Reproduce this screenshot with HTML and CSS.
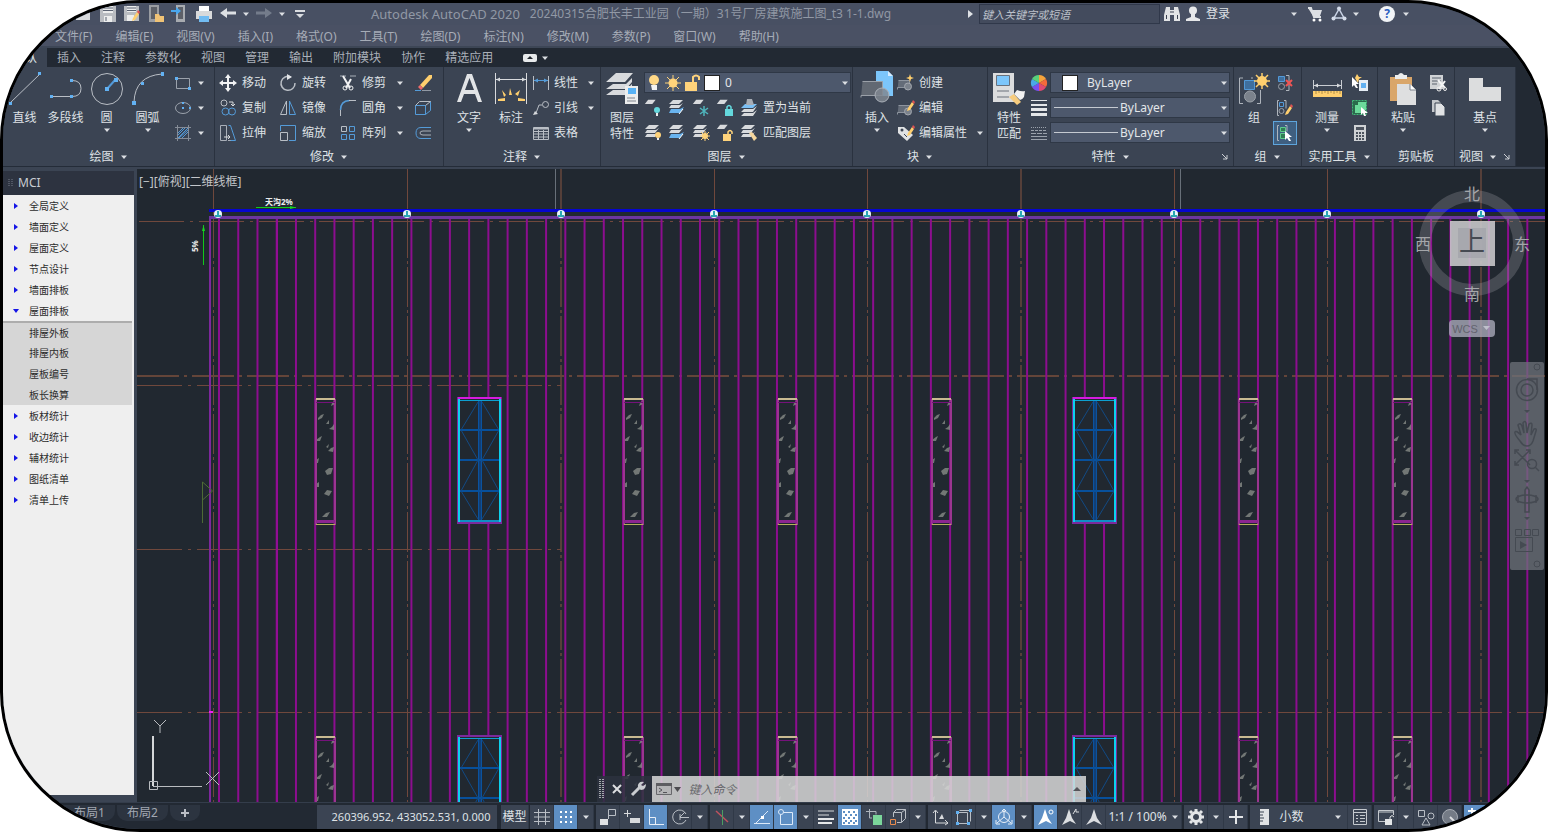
FILE: index.html
```html
<!DOCTYPE html>
<html lang="zh-CN">
<head>
<meta charset="utf-8">
<title>Autodesk AutoCAD 2020</title>
<link rel="stylesheet" href="styles.css">
</head>
<body>
<svg class="sprite" aria-hidden="true">
  <!-- shared 18px parts -->
  <symbol id="dn" viewBox="0 0 8 8"><path d="M1 2.500h6L4 6z" fill="#dcdfe3"/></symbol>
  <symbol id="sheet" viewBox="0 0 18 18"><path d="M5 1h9l-4 5H1z" fill="#d8dadd"/></symbol>
  <symbol id="stack" viewBox="0 0 18 18"><path d="M5 1h10l-4 4H1zM3 6h9l3-2-4 5H1zM3 10h9l3-2-4 5H1z" fill="#d8dadd"/></symbol>
  <symbol id="stackb" viewBox="0 0 18 18"><path d="M5 1h10l-4 4H1zM3 6h9l3-2-4 5H1z" fill="#d8dadd"/><path d="M3 10h9l4-2-4 6H1z" fill="#69b4f0"/><path d="m11 15 4-5" stroke="#fff"/></symbol>
  <symbol id="blk" viewBox="0 0 18 18"><path d="M1.500 6.500h11v7h-12v2" fill="#646c78" stroke="#8d949e"/><circle cx="11" cy="12.500" r="3.500" fill="#7b828c" stroke="#a2a7ae"/></symbol>
  <symbol id="pen" viewBox="0 0 18 18"><path d="m11 10-1 3 3-1 4-6-2-2z" fill="#ffcf6e"/><path d="m15 4 2 2 1-2-2-2z" fill="#e05252"/></symbol>
</svg>

<div class="frame">
  <header class="title">
    <div class="quick">
      <button aria-label="打开"><svg class="i" viewBox="0 0 18 18"><path d="M1 4h6l2 2h6v9H1z" fill="#d9dbde"/></svg></button>
      <button aria-label="保存"><svg class="i" viewBox="0 0 18 18"><path d="M1 1h16v16H1z" fill="#b9bcc1"/><path d="M4 1h10v7H4zM5 11h8v6H5z" fill="#eceded"/><path d="M4 3h10M4 5.500h10M7 12v4" stroke="#596171"/></svg></button>
      <button aria-label="另存为"><svg class="i" viewBox="0 0 18 18"><path d="M1 1h15v15H1z" fill="#b9bcc1"/><path d="M4 1h9v6H4zM4 10h7v6H4z" fill="#eceded"/><path d="M4 3h9M4 5.500h9" stroke="#596171"/><use href="#pen" y="3" x="-1" width="18" height="18"/></svg></button>
      <button aria-label="从 Web 打开"><svg class="i" viewBox="0 0 18 18"><path d="M2 0h10v17H2z" fill="#9a9da2"/><path d="M4 2h6v12H4z" fill="#5d6068"/><path d="M8 9h4l1 2h4v6H8z" fill="#f0c376"/></svg></button>
      <button aria-label="保存到 Web"><svg class="i" viewBox="0 0 18 18"><path d="M5 0h9v17H5z" fill="#a8abb0"/><path d="M7 2h5v12H7z" fill="#5d6068"/><path d="M0 5h5V2l5 4-5 4V7H0z" fill="#4aa7ee"/></svg></button>
      <button aria-label="打印"><svg class="i" viewBox="0 0 18 18"><path d="M4 1h10v5H4z" fill="#fff"/><path d="M1 6h16v8H1z" fill="#d9dadb"/><path d="M4 11h10v6H4z" fill="#72bcf2"/></svg></button>
      <button aria-label="放弃"><svg class="i" viewBox="0 0 18 18"><path d="m1 8 7-5v3.500h9v3H8V13z" fill="#dde0e4"/></svg></button>
      <button class="arr" aria-label="放弃列表"><svg><use href="#dn"/></svg></button>
      <button aria-label="重做"><svg class="i" viewBox="0 0 18 18"><path d="m17 8-7-5v3.500H1v3h9V13z" fill="#747c8b"/></svg></button>
      <button class="arr" aria-label="重做列表"><svg><use href="#dn"/></svg></button>
      <button aria-label="自定义快速访问工具栏"><svg class="i" viewBox="0 0 18 18"><path d="M4 5h10v2H4zM5 9h8l-4 4z" fill="#d9dce0"/></svg></button>
    </div>
    <h1><span class="app">Autodesk AutoCAD 2020</span><span>20240315合肥长丰工业园（一期）31号厂房建筑施工图_t3 1-1.dwg</span></h1>
    <div class="info">
      <svg class="play" viewBox="0 0 8 8"><path d="m2 0 5 4-5 4z" fill="#dfe2e6"/></svg>
      <input type="search" aria-label="搜索" placeholder="键入关键字或短语">
      <button class="wide" aria-label="查找"><svg class="i" viewBox="0 0 18 18"><path d="M3 2h4v3h4V2h4l2 8v6h-6v-6H7v6H1v-6z" fill="#e2e4e6"/><path d="M3.500 10v4M14.500 10v4M7 7h4" stroke="#3c4352"/></svg></button>
      <button class="wide login"><svg class="i" viewBox="0 0 18 18"><circle cx="9" cy="5.500" r="4" fill="#e6e7e9"/><path d="M7 9h4v3l5 2v2H2v-2l5-2z" fill="#e6e7e9"/></svg>登录</button>
      <button class="arr far" aria-label="登录菜单"><svg><use href="#dn"/></svg></button>
      <button aria-label="应用商店"><svg class="i" viewBox="0 0 18 18"><path d="M2 3h3l1 2h10l-2 6H7z" fill="#dcdfe4"/><path d="M2 3h3l3 9h7" fill="none" stroke="#dcdfe4" stroke-width="2"/><circle cx="8" cy="15" r="1.500" fill="#fff"/><circle cx="14" cy="15" r="1.500" fill="#fff"/></svg></button>
      <button aria-label="保持连接"><svg class="i" viewBox="0 0 18 18"><path d="M9 4 4 13h10z" fill="none" stroke="#c9d3e6" stroke-width="1.500"/><circle cx="9" cy="3.500" r="2" fill="#d5dcea"/><circle cx="3.500" cy="13.500" r="2" fill="#d5dcea"/><circle cx="14.500" cy="13.500" r="2" fill="#d5dcea"/></svg></button>
      <button class="arr" aria-label="连接菜单"><svg><use href="#dn"/></svg></button>
      <button class="help" aria-label="帮助">?</button>
      <button class="arr" aria-label="帮助菜单"><svg><use href="#dn"/></svg></button>
    </div>
  </header>

  <nav class="menu" aria-label="菜单">
    <button>文件(F)</button><button>编辑(E)</button><button>视图(V)</button><button>插入(I)</button><button>格式(O)</button><button>工具(T)</button><button>绘图(D)</button><button>标注(N)</button><button>修改(M)</button><button>参数(P)</button><button>窗口(W)</button><button>帮助(H)</button>
  </nav>

  <nav class="tabs" aria-label="功能区">
    <button class="on">默认</button><button>插入</button><button>注释</button><button>参数化</button><button>视图</button><button>管理</button><button>输出</button><button>附加模块</button><button>协作</button><button>精选应用</button>
    <button class="mini" aria-label="最小化"><svg width="14" height="8" viewBox="0 0 14 8"><rect width="14" height="8" rx="2" fill="#e8eaec"/><path d="M4 5h6L7 2z" fill="#20262e"/></svg><svg class="d"><use href="#dn"/></svg></button>
  </nav>

  <div class="ribbon">
    <section class="g draw">
      <div class="body">
        <button class="big"><svg class="b" viewBox="0 0 34 34"><path d="M2 32 32 3" stroke="#b9bec5"/><path d="M1 31h3v3H1zM30 1h3v3h-3z" fill="#62b1f2"/></svg>直线</button>
        <button class="big"><svg class="b" viewBox="0 0 34 34"><path d="M2 25.500h21q9 0 9-8t-9-8" fill="none" stroke="#b9bec5"/><path d="M1 24h3v3H1zM21 24h3v3h-3zM21 8h3v3h-3z" fill="#62b1f2"/></svg>多段线</button>
        <button class="big"><svg class="b" viewBox="0 0 34 34"><circle cx="17" cy="18" r="15.500" fill="none" stroke="#b9bec5"/><path d="m17 18 8-9" stroke="#5299d8" stroke-width="2"/><path d="M15 16h4v4h-4zM24 7h4v4h-4z" fill="#62b1f2"/></svg>圆<svg class="d"><use href="#dn"/></svg></button>
        <button class="big"><svg class="b" viewBox="0 0 34 34"><path d="M3 31Q4 5 31 3" fill="none" stroke="#b9bec5"/><path d="M1 30h4v4H1zM10 11h3v3h-3zM30 1h3v4h-3z" fill="#62b1f2"/></svg>圆弧<svg class="d"><use href="#dn"/></svg></button>
        <div class="col gap">
          <button class="s" aria-label="矩形"><svg class="i" viewBox="0 0 18 18"><path d="M2.500 4.500h13v10h-13z" fill="none" stroke="#9ba2ac"/><path d="M1 3h3v3H1zM14 13h3v3h-3z" fill="#62b1f2"/></svg><svg class="d"><use href="#dn"/></svg></button>
          <button class="s" aria-label="椭圆"><svg class="i" viewBox="0 0 18 18"><ellipse cx="9" cy="9" rx="7.500" ry="5.500" fill="none" stroke="#9ba2ac"/><path d="M8 8h2v2H8zM15 8h2v2h-2zM8 3h2v2H8z" fill="#62b1f2"/></svg><svg class="d"><use href="#dn"/></svg></button>
          <button class="s" aria-label="图案填充"><svg class="i" viewBox="0 0 18 18"><path d="M3.500 1v16M14.500 1v16M1 3.500h16M1 14.500h16" stroke="#858c97"/><path d="m4 9 5-5M4 14 14 4M8 14l6-6M4 11l7-7M5 14l9-8" stroke="#5299d8"/></svg><svg class="d"><use href="#dn"/></svg></button>
        </div>
      </div>
      <h2>绘图<svg class="d"><use href="#dn"/></svg></h2>
    </section>

    <section class="g modify">
      <div class="body">
        <div class="col c60">
          <button class="s"><svg class="i" viewBox="0 0 18 18"><path d="m9 0 3 4h-2v4h4V6l4 3-4 3v-2h-4v4h2l-3 4-3-4h2v-4H4v2L0 9l4-3v2h4V4H6z" fill="#f1f2f3"/></svg>移动</button>
          <button class="s"><svg class="i" viewBox="0 0 18 18" fill="none"><circle cx="5" cy="4" r="3" stroke="#b9bec5"/><path d="M10 3h4v4m-2-2 2 2 2-2" stroke="#d8dadd"/><circle cx="6.500" cy="12.500" r="3.500" stroke="#549bd8"/><circle cx="13" cy="12.500" r="3.500" stroke="#549bd8"/></svg>复制</button>
          <button class="s"><svg class="i" viewBox="0 0 18 18" fill="none"><path d="M1.500 1.500h6v15h-6zM9 16.500h3" stroke="#a9afb8"/><path d="M9.500 1.500h2l5 15h-5" stroke="#549bd8"/><path d="M5 13h6m-2-2 2 2-2 2" stroke="#d8dadd"/></svg>拉伸</button>
        </div>
        <div class="col c60">
          <button class="s"><svg class="i" viewBox="0 0 18 18" fill="none"><path d="M12 3A7 7 0 1 0 16 9" stroke="#b9bec5" stroke-width="1.500"/><path d="M8 0v6l5-3z" fill="#e3e5e8"/></svg>旋转</button>
          <button class="s"><svg class="i" viewBox="0 0 18 18" fill="none"><path d="M7.500 2v13.500H1.500z" stroke="#b9bec5"/><path d="M10.500 2v13.500h6z" stroke="#549bd8"/></svg>镜像</button>
          <button class="s"><svg class="i" viewBox="0 0 18 18" fill="none"><path d="M1.500 7V1.500h15v15H10" stroke="#549bd8"/><path d="M1.500 8.500h7v8h-7z" stroke="#b9bec5"/></svg>缩放</button>
        </div>
        <div class="col c75">
          <button class="s"><svg class="i" viewBox="0 0 18 18" fill="none"><path d="M1 2h6M11 2h6" stroke="#a9afb8"/><path d="m4 2 7 12M12 5 7 14" stroke="#f1f2f3" stroke-width="2"/><circle cx="6" cy="14" r="2" stroke="#f1f2f3"/><circle cx="12" cy="14" r="2" stroke="#f1f2f3"/></svg>修剪<svg class="d"><use href="#dn"/></svg></button>
          <button class="s"><svg class="i" viewBox="0 0 18 18" fill="none"><path d="M1.500 17v-6" stroke="#b9bec5"/><path d="M1.500 11q0-9 9-9.500" stroke="#549bd8" stroke-width="1.500"/><path d="M10 1.500h7" stroke="#b9bec5"/></svg>圆角<svg class="d"><use href="#dn"/></svg></button>
          <button class="s"><svg class="i" viewBox="0 0 18 18" fill="none"><path d="M2.500 2.500h5v5h-5z" stroke="#b9bec5"/><path d="M10.500 2.500h5v5h-5zM2.500 10.500h5v5h-5zM10.500 10.500h5v5h-5z" stroke="#549bd8"/></svg>阵列<svg class="d"><use href="#dn"/></svg></button>
        </div>
        <div class="col">
          <button class="s" aria-label="删除"><svg class="i" viewBox="0 0 18 18"><path d="m6 11 9-10h3v3L9 14z" fill="#ffcf6e"/><path d="m4 13 2-2 3 3-2 2z" fill="#f06a6a"/><path d="M1 16.500h6" stroke="#549bd8"/><path d="M8 16.500h9" stroke="#9299a4"/></svg></button>
          <button class="s" aria-label="分解"><svg class="i" viewBox="0 0 18 18" fill="none"><path d="M1.500 6.500h10v9h-10zM11.500 15.500l5-4v-9" stroke="#549bd8"/><path d="m1.500 6.500 4-4h11l-5 4" stroke="#b9bec5"/></svg></button>
          <button class="s" aria-label="偏移"><svg class="i" viewBox="0 0 18 18" fill="none"><path d="M17 3.500H7q-5 0-5 5.500t5 5.500h10" stroke="#549bd8"/><path d="M17 7H9q-3 0-3 2t3 2h8" stroke="#a9afb8"/></svg></button>
        </div>
      </div>
      <h2>修改<svg class="d"><use href="#dn"/></svg></h2>
    </section>

    <section class="g anno">
      <div class="body">
        <button class="big"><svg class="b" viewBox="0 0 34 34"><path d="M5 31 15 3h5l10 28h-4l-3-8H12l-3 8zm8-12h9L17.500 7z" fill="#e2e4e6"/></svg>文字<svg class="d"><use href="#dn"/></svg></button>
        <button class="big"><svg class="b" viewBox="0 0 34 34"><path d="M1.500 2v31M32.500 2v31M2 8.500h30" stroke="#d8dadd"/><path d="m2 8.500 4-2v4zM32 8.500l-4-2v4z" fill="#d8dadd"/><path d="m16 17 2 7h-3zM8 19l4 5-2 2zM26 19l-5 4 3 2zM4 28l7-1v3H4zM31 28l-7-1v3h7z" fill="#ffcf6e"/></svg>标注</button>
        <div class="col">
          <button class="s"><svg class="i" viewBox="0 0 18 18"><path d="M1.500 2v14M16.500 2v14" stroke="#b9bec5"/><path d="M2 6.500h14" stroke="#549bd8"/><path d="m2 6.500 4-2v4zM16 6.500l-4-2v4z" fill="#549bd8"/></svg>线性<svg class="d"><use href="#dn"/></svg></button>
          <button class="s"><svg class="i" viewBox="0 0 18 18" fill="none"><circle cx="13.500" cy="5.500" r="3" stroke="#b9bec5"/><path d="M10 6H7l-3 8" stroke="#b9bec5"/><path d="m1 16 5-1-3-3z" fill="#d8dadd"/></svg>引线<svg class="d"><use href="#dn"/></svg></button>
          <button class="s"><svg class="i" viewBox="0 0 18 18" fill="none" stroke="#b9bec5"><path d="M1.500 3.500h15v12h-15zM2 7.500h15M2 10h15M2 13h15M6.500 6v9M11.500 6v9"/><path d="M2 4.500h14" stroke-width="2"/></svg>表格</button>
        </div>
      </div>
      <h2>注释<svg class="d"><use href="#dn"/></svg></h2>
    </section>

    <section class="g layer">
      <div class="body">
        <button class="big"><svg class="b" viewBox="0 0 34 34"><path d="M11 2h17l-8 9H1zM8 13h13l6-6v4l-6 7H1zM8 19h13l6-6v4l-6 7H1z" fill="#d8dadd"/><path d="M20 15h13v18H20z" fill="#eceded"/><path d="M23 17h8v6h-8z" fill="#58b2f5"/><path d="M22 27h8M22 30h9" stroke="#80868f"/></svg>图层<br>特性</button>
        <div class="stackcol">
          <label class="combo lay"><svg class="i" viewBox="0 0 18 18"><circle cx="9" cy="6" r="5" fill="#ffd887"/><path d="M6 11h6v5H7z" fill="#f4f4f4"/></svg><svg class="i" viewBox="0 0 18 18"><circle cx="9" cy="9" r="4.500" fill="#ffd37b"/><path d="M9 1v16M1 9h16M3 3l12 12M15 3 3 15" stroke="#ffd37b"/></svg><svg class="i" viewBox="0 0 18 18"><path d="M2 8h12v9H2z" fill="#ffd37b"/><path d="M10 8V3q3-3 6 0v3" fill="none" stroke="#ffd37b" stroke-width="2"/></svg><i class="sw"></i><select aria-label="图层"><option>0</option></select><svg class="d"><use href="#dn"/></svg></label>
          <div class="irow">
            <button aria-label="关"><svg class="i" viewBox="0 0 18 18"><use href="#sheet" width="15" height="15"/><circle cx="13" cy="11" r="3" fill="#64d8dd"/><path d="M12 14h2v3h-2z" fill="#eee"/></svg></button>
            <button aria-label="隔离"><svg class="i"><use href="#stackb"/></svg></button>
            <button aria-label="冻结"><svg class="i" viewBox="0 0 18 18"><use href="#sheet" width="15" height="15"/><path d="M12 7v10M8 9l8 6M16 9l-8 6" stroke="#4fb5bd" stroke-width="1.500"/></svg></button>
            <button aria-label="锁定"><svg class="i" viewBox="0 0 18 18"><use href="#sheet" width="15" height="15"/><path d="M9 10h8v7H9z" fill="#64d8dd"/><path d="M11 10V8q2-3 4 0v2" fill="none" stroke="#64d8dd" stroke-width="1.500"/></svg></button>
            <button class="tx"><svg class="i" viewBox="0 0 18 18"><path d="M5 5h12l-4 4H1z" fill="#7cc0f5"/><path d="M4 10h9l4-3-4 6H1zM4 14h9l4-3-4 6H1z" fill="#d8dadd"/><path d="M7 0h5l2 6H6z" fill="#a8adb5"/></svg>置为当前</button>
          </div>
          <div class="irow">
            <button aria-label="全部打开"><svg class="i" viewBox="0 0 18 18"><use href="#stack"/><circle cx="14" cy="11" r="3" fill="#ffd37b"/><path d="M13 14h2v2h-2z" fill="#eee"/></svg></button>
            <button aria-label="取消隔离"><svg class="i"><use href="#stackb"/></svg></button>
            <button aria-label="全部解冻"><svg class="i" viewBox="0 0 18 18"><use href="#stack"/><circle cx="13" cy="12" r="3" fill="#ffd37b"/><path d="M13 7v10M8 12h10M9 8l8 8M17 8l-8 8" stroke="#ffd37b"/></svg></button>
            <button aria-label="解锁"><svg class="i" viewBox="0 0 18 18"><use href="#sheet" width="15" height="15"/><path d="M7 10h8v7H7z" fill="#ffd37b"/><path d="M12 10V8q2-3 4 0v2" fill="none" stroke="#ffd37b" stroke-width="1.500"/></svg></button>
            <button class="tx"><svg class="i" viewBox="0 0 18 18"><use href="#stack"/><path d="m9 9 3-1 5 6-3 3z" fill="#f6d79d"/></svg>匹配图层</button>
          </div>
        </div>
      </div>
      <h2>图层<svg class="d"><use href="#dn"/></svg></h2>
    </section>

    <section class="g block">
      <div class="body">
        <button class="big"><svg class="b" viewBox="0 0 34 34"><path d="M16 0h12l5 5v20H16z" fill="#7cc6fb"/><path d="M28 0v5h5" fill="#d5ecff"/><path d="M2.500 10.500h20v14H1v2" fill="#626973" stroke="#9aa0a8"/><circle cx="22" cy="24" r="7" fill="#808791" fill-opacity=".85" stroke="#aab0b8"/></svg>插入<svg class="d"><use href="#dn"/></svg></button>
        <div class="col">
          <button class="s"><svg class="i" viewBox="0 0 18 18"><use href="#blk"/><path d="m13 0 1 3 3 1-3 1-1 3-1-3-3-1 3-1z" fill="#ffcf6e"/></svg>创建</button>
          <button class="s"><svg class="i" viewBox="0 0 18 18"><use href="#blk"/><use href="#pen" y="-1" width="18" height="18"/></svg>编辑</button>
          <button class="s"><svg class="i" viewBox="0 0 18 18"><path d="M1 3h6l9 8-6 6-9-8z" fill="#e0e2e4"/><circle cx="5" cy="6" r="1.500" fill="#3b4453"/><path d="m7 10 3 3" stroke="#3b4453"/><use href="#pen" y="-1" width="18" height="18"/></svg>编辑属性<svg class="d"><use href="#dn"/></svg></button>
        </div>
      </div>
      <h2>块<svg class="d"><use href="#dn"/></svg></h2>
    </section>

    <section class="g props">
      <div class="body">
        <button class="big"><svg class="b" viewBox="0 0 34 34"><path d="M1 2h21v29H1z" fill="#dcddde"/><path d="M4.500 4.500h13v10h-13z" fill="#7cc6fb" stroke="#68717d"/><path d="M5 20h12M5 26h12" stroke="#6a717b"/><path d="m17 26 5-3 7 8-4 3q-5-5-8-8z" fill="#f7cc7e"/><path d="m22 23 3-4q5 2 8 1l-1 6q-2 3-4 3z" fill="#f1f1f1"/></svg>特性<br>匹配</button>
        <div class="col ic">
          <svg class="i" viewBox="0 0 18 18"><path d="M9 9V1a8 8 0 0 1 7 4z" fill="#f5a33b"/><path d="M9 9l7-4a8 8 0 0 1 0 8z" fill="#f56a3b"/><path d="m9 9 7 4a8 8 0 0 1-7 4z" fill="#e04a72"/><path d="M9 9v8a8 8 0 0 1-7-4z" fill="#7a4ff0"/><path d="m9 9-7 4a8 8 0 0 1 0-8z" fill="#4aa8e8"/><path d="M9 9 2 5a8 8 0 0 1 7-4z" fill="#58d07a"/></svg>
          <svg class="i" viewBox="0 0 18 18" fill="#e4e6e8"><path d="M1 1h16v1H1zM1 5h16v2H1zM1 9h16v3H1zM1 14h16v3H1z"/></svg>
          <svg class="i" viewBox="0 0 18 18" stroke="#9ba2ac"><path d="M1 3.500h16" stroke-dasharray="1 1"/><path d="M1 6.500h16" stroke-dasharray="3 1"/><path d="M1 9.500h16" stroke-dasharray="5 1"/><path d="M1 12.500h16M1 15.500h16"/></svg>
        </div>
        <div class="stackcol">
          <label class="combo"><i class="sw"></i><select aria-label="颜色"><option>ByLayer</option></select><svg class="d"><use href="#dn"/></svg></label>
          <label class="combo ln"><i class="rule"></i><select aria-label="线宽"><option>ByLayer</option></select><svg class="d"><use href="#dn"/></svg></label>
          <label class="combo ln"><i class="rule"></i><select aria-label="线型"><option>ByLayer</option></select><svg class="d"><use href="#dn"/></svg></label>
        </div>
      </div>
      <h2>特性<svg class="d"><use href="#dn"/></svg><svg class="launch" viewBox="0 0 8 8"><path d="m1 1 5 5M6 2v4H2" fill="none" stroke="#cdd0d5"/></svg></h2>
    </section>

    <section class="g group">
      <div class="body">
        <button class="big"><svg class="b" viewBox="0 0 34 34" fill="none"><path d="M6 7H2.500v25.500H6M20 32.500h3.500V19M16 7h-2" stroke="#aeb4bc"/><path d="M7.500 9.500h10v9h-10z" fill="#3f6f9e" stroke="#5299d8"/><circle cx="13" cy="25.500" r="5.500" fill="#7b828c" stroke="#9aa0a8"/><circle cx="25" cy="10" r="5" fill="#ffcf6e"/><path d="M25 2v16M17 10h16M19 4l12 12M31 4 19 16" stroke="#ffcf6e" stroke-width="1.500"/></svg>组</button>
        <div class="col ic">
          <button class="s" aria-label="解除编组"><svg class="i" viewBox="0 0 18 18" fill="none"><path d="M10 1.500h3v15h-3" stroke="#aeb4bc"/><path d="M2.500 2.500h6v5h-6z" fill="#3f6f9e" stroke="#5299d8"/><circle cx="5.500" cy="12.500" r="3" stroke="#9aa0a8"/><path d="m10 6 6 6M16 6l-6 6" stroke="#f05555" stroke-width="2"/></svg></button>
          <button class="s" aria-label="组编辑"><svg class="i" viewBox="0 0 18 18" fill="none"><path d="M3 1.500H1.500v15H3M8 1.500h2v8" stroke="#aeb4bc"/><path d="M3.500 3.500h4v4h-4z" stroke="#5299d8"/><circle cx="5.500" cy="12" r="2.500" stroke="#9aa0a8"/><use href="#pen" y="3" x="-1" width="18" height="18"/></svg></button>
          <button class="s hot" aria-label="启用组选择"><svg class="i" viewBox="0 0 18 18" fill="none"><path d="M3 1.500H1.500v15H3M9 1.500h2v6" stroke="#aeb4bc"/><path d="M4.500 3.500h5v4h-5zM4.500 9.500h5v5h-5z" fill="#2f7d54" stroke="#5ecb8c"/><path d="m9 7 7 6h-3l2 4h-2l-2-3-2 2z" fill="#fff"/></svg></button>
        </div>
      </div>
      <h2>组<svg class="d"><use href="#dn"/></svg></h2>
    </section>

    <section class="g util">
      <div class="body">
        <button class="big"><svg class="b" viewBox="0 0 34 34"><path d="M3.500 9v9M31.500 9v9M4 14.500h27" stroke="#c9cdd2"/><path d="m4 14.500 4-2v4zM31 14.500l-4-2v4z" fill="#d8dadd"/><path d="M3 20h29v6H3z" fill="#ffcf6e"/><path d="M6 20v3M9 20v2M12 20v3M15 20v2M18 20v3M21 20v2M24 20v3M27 20v2M30 20v3" stroke="#b08f48"/></svg>测量<svg class="d"><use href="#dn"/></svg></button>
        <div class="col">
          <button class="s" aria-label="快速选择"><svg class="i" viewBox="0 0 18 18"><path d="M8 6h9v11H8z" fill="#e6eef6"/><path d="M10 9h5v5h-5z" fill="#62b1f2"/><path d="m6 0 2 3h3L8 5 7 9 4 4z" fill="#ffcf6e"/><path d="m1 3 7 7H5l2 4H5l-2-3-2 2z" fill="#fff"/></svg></button>
          <button class="s" aria-label="全部选择"><svg class="i" viewBox="0 0 18 18"><path d="M1.500 1.500h14v14h-14z" fill="#2a6a4b" stroke="#41b879" stroke-dasharray="2 1"/><path d="M4 6h3V3h8v8h-3v3H4z" fill="#6cd99b"/><path d="m10 8 7 6h-3l1 3h-2l-1-3-2 2z" fill="#fff"/></svg></button>
          <button class="s" aria-label="计算器"><svg class="i" viewBox="0 0 18 18"><path d="M3 1h12v16H3z" fill="#cfd2d5"/><path d="M5 3h8v3H5z" fill="#4c535e"/><path d="M5 9h8M5 12h8M5 15h8" stroke="#4c535e" stroke-width="2" stroke-dasharray="2 1"/></svg></button>
        </div>
      </div>
      <h2>实用工具<svg class="d"><use href="#dn"/></svg></h2>
    </section>

    <section class="g clip">
      <div class="body">
        <button class="big"><svg class="b" viewBox="0 0 34 34"><path d="M4 6h22v24H4z" fill="#d9a66a"/><path d="M9 4h3q3-4 6 0h3v4H9z" fill="#eceded"/><path d="M11 13h13l6 6v15H11z" fill="#dedfe0"/><path d="M24 13v6h6" fill="#fff" stroke="#7c828b"/></svg>粘贴<svg class="d"><use href="#dn"/></svg></button>
        <div class="col">
          <button class="s" aria-label="剪切"><svg class="i" viewBox="0 0 18 18" fill="none"><path d="M1 1h13v14H1z" fill="#cfd2d5"/><path d="M3 4h9M3 7h9M3 10h5" stroke="#59616d"/><path d="m9 6 7 8M16 7l-6 8" stroke="#f3f4f5" stroke-width="2"/><circle cx="10" cy="15" r="2" stroke="#eee"/><circle cx="16" cy="15" r="1.500" stroke="#eee"/></svg></button>
          <button class="s" aria-label="复制"><svg class="i" viewBox="0 0 18 18"><path d="M3 1h6l3 3v9H3z" fill="#c5c8cc"/><path d="M6 4h6l4 4v9H6z" fill="#e0e2e4" stroke="#3b4453"/></svg></button>
        </div>
      </div>
      <h2>剪贴板</h2>
    </section>

    <section class="g view">
      <div class="body">
        <button class="big"><svg class="b" viewBox="0 0 34 34"><path d="M1 7h14v9h18v14H1z" fill="#dcddde"/></svg>基点<svg class="d"><use href="#dn"/></svg></button>
      </div>
      <h2>视图<svg class="d"><use href="#dn"/></svg><svg class="launch" viewBox="0 0 8 8"><path d="m1 1 5 5M6 2v4H2" fill="none" stroke="#cdd0d5"/></svg></h2>
    </section>
  </div>

  <main>
    <aside>
      <h2><svg width="6" height="10" viewBox="0 0 6 10"><path d="M1 1v8M4 1v8" stroke="#767d89" stroke-dasharray="1 1"/></svg>MCI</h2>
      <ul>
        <li><button>全局定义</button></li><li><button>墙面定义</button></li><li><button>屋面定义</button></li><li><button>节点设计</button></li><li><button>墙面排板</button></li>
        <li class="open"><button>屋面排板</button>
          <ul><li><button>排屋外板</button></li><li><button>排屋内板</button></li><li><button>屋板编号</button></li><li><button>板长换算</button></li></ul>
        </li>
        <li><button>板材统计</button></li><li><button>收边统计</button></li><li><button>辅材统计</button></li><li><button>图纸清单</button></li><li><button>清单上传</button></li>
      </ul>
    </aside>

    <div class="canvas">
      <svg class="plan" role="img" aria-label="屋面排板平面图">
        <defs>
          <g id="win">
            <path d="M0 0h43v125H0z" fill="#212830" stroke="#7b2a9c" stroke-width="2"/>
            <path d="M22 3v120" stroke="#123f75" stroke-width="4"/>
            <path d="M20.500 3v120M23.500 3v120" stroke="#0a529f"/>
            <path d="M2 32h39M2 62h39M2 93h39" stroke="#07509c" stroke-width="2"/>
            <path d="M20 4 3 32l17 30L3 93l17 28M24 4l17 28-17 30 17 31-17 28" fill="none" stroke="#124a84"/>
            <path d="M1 2.500h41" stroke="#0e9fd0"/><path d="M1 123h41" stroke="#0e8fc4" stroke-width="2"/>
            <path d="M1 1v123M42 1v123" stroke="#0cd0ee" stroke-width="2"/>
          </g>
          <g id="flakes" fill="#8d918c" fill-opacity=".75">
            <path d="m17 4 3-3v4l-4 2zM3 19l3-3 3-1-2 4-4 2zM11 25l3-4v4zM14 30l3-2 2-3v6zM1 41l4-3 2-1-2 5H1zM11 48l3-3-1 4zM13 52l3-3 3-1-1 5zM1 61l3-2-1 5H1zM10 72l4-3h4l-2 6-4 1zM1 85l3-2v5H1zM9 95l3-4 5 1-3 5zM7 118l4-4 4-1-3 5z"/>
          </g>
          <g id="strip">
            <use href="#flakes"/>
            <path d="M1 0v126M20 0v126" stroke="#9b3590" stroke-width="2"/>
            <path d="M1 0h19" stroke="#c8ba91" stroke-width="2"/><path d="M1 3.500h19" stroke="#74127a"/>
            <path d="M1 122.500h19" stroke="#8b2590" stroke-width="3"/><path d="M1 125.500h19" stroke="#b5b05c"/>
          </g>
          <g id="pt"><circle r="4" fill="#e8f4fa"/><path d="M-3 1h6v2h-6zM-1-3h2v6h-2z" fill="#2ba7b4"/></g>
        </defs>
        <g transform="translate(-137 -169)">
          <g stroke="#70483c" fill="none">
            <path d="M213.500 169V802M407.500 169V802M714.500 169V802M867.500 169V802M1174.500 169V802M1327.500 169V802" stroke-dasharray="40 3 3 3"/>
            <path d="M561 169V802M1021 169V802M1481 169V802" stroke="#553f39" stroke-width="2" stroke-dasharray="40 3 3 3"/>
            <path d="M139 221.500H1545M137 385.500H561M137 549.500H561M137 712.500H1545" stroke-dasharray="45 6 3 6"/>
            <path d="M137 376H1545" stroke="#644539" stroke-width="2" stroke-dasharray="42 5 3 5"/>
          </g>
          <path d="M555.500 169V209M1180.500 169V209" stroke="#687079"/>
          <path d="M218 510.500H1545" stroke="#8c0e8f" stroke-width="583" stroke-dasharray="2 17.240"/>
          <path d="M210 217V802" stroke="#7d279c" stroke-width="2"/>
          <path d="M277 219V802" stroke="#920d94" stroke-width="2"/>
          <path d="M209 210.500H1545" stroke="#0505cf" stroke-width="3"/>
          <path d="M209 217.500H1545" stroke="#6b36a0" stroke-width="3"/>
          <use href="#win" x="458" y="398"/><use href="#win" x="1073" y="398"/><use href="#win" x="458" y="736"/><use href="#win" x="1073" y="736"/>
          <path d="M458 398h43M1073 398h43" stroke="#d51be0" stroke-width="2"/>
          <use href="#strip" x="315" y="399"/><use href="#strip" x="623" y="399"/><use href="#strip" x="777" y="399"/><use href="#strip" x="931" y="399"/><use href="#strip" x="1238" y="399"/><use href="#strip" x="1392" y="399"/>
          <use href="#strip" x="315" y="737"/><use href="#strip" x="623" y="737"/><use href="#strip" x="777" y="737"/><use href="#strip" x="931" y="737"/><use href="#strip" x="1238" y="737"/><use href="#strip" x="1392" y="737"/>
          <use href="#pt" x="218" y="214"/><use href="#pt" x="407" y="214"/><use href="#pt" x="561" y="214"/><use href="#pt" x="714" y="214"/><use href="#pt" x="867" y="214"/><use href="#pt" x="1021" y="214"/><use href="#pt" x="1174" y="214"/><use href="#pt" x="1327" y="214"/><use href="#pt" x="1481" y="214"/>
          <path d="M256 207.500h40M203.500 225v40" stroke="#11c81a"/><path d="m290 206 6 1.500-6 1.500zM202 231l1.500-6 1.500 6z" fill="#19d322"/>
          <text x="265" y="205" class="note">天沟2%</text>
          <text class="note" transform="translate(198 252) rotate(-90)">5%</text>
          <path d="M202.500 523v-41l10 9-10 9" fill="none" stroke="#4d6b35"/>
          <path d="M209 712h4" stroke="#f01ff0" stroke-width="2"/>
          <path d="M153 736v50" stroke="#d5d7d9" stroke-width="2"/><path d="M153 786.500h49M149.500 781.500h8v8h-8zM154 720l6 6 6-6M160 726v7M206 772l13 13M219 772l-13 13" fill="none" stroke="#b9bcc0"/>
        </g>
      </svg>

      <div class="vp">[−][俯视][二维线框]</div>

      <svg class="cube" viewBox="0 0 118 170" role="img" aria-label="ViewCube">
        <circle cx="58" cy="68" r="47" fill="none" stroke="#a6a7ab" stroke-opacity=".28" stroke-width="12"/>
        <path d="M36 46h45v45H36z" fill="#c9c9cc" fill-opacity=".88"/><path d="M44 53h28v30H44z" fill="#9a9da5" fill-opacity=".55"/>
        <text x="58" y="76" font-size="26" fill="#464a52">上</text>
        <g font-size="16" fill="#a4a6aa"><text x="58" y="25">北</text><text x="58" y="125">南</text><text x="9" y="75">西</text><text x="108" y="75">东</text></g>
        <rect x="35" y="145" width="46" height="17" rx="4" fill="#a8a8b8" fill-opacity=".8"/>
        <text x="51" y="158" font-size="11" fill="#63636f" class="sans">WCS</text><path d="M69 151h7l-3.500 4z" fill="#c0c0cc"/>
      </svg>

      <svg class="nav" viewBox="0 0 34 208" role="img" aria-label="导航栏" fill="none" stroke="#454a52">
        <rect width="34" height="208" rx="2" fill="#6e727a" fill-opacity=".75" stroke="none"/>
        <circle cx="27" cy="5" r="3"/><circle cx="27" cy="202" r="3"/>
        <g stroke-width="1.500"><circle cx="17" cy="28" r="10.500"/><circle cx="17" cy="28" r="6"/><path d="M17 17h10v11"/>
        <path d="M10 79q-6-7-5-9t6 3l-3-10q2-3 4 1l2 7-1-10q2-3 3 0l1 10 2-9q3-2 3 1l-1 10 3-6q3-1 2 2l-3 10q-2 5-6 5t-7-5z"/>
        <path d="m5 88 15 15M20 88 5 103M5 92v-4h4M16 88h4v4M5 99v4h4"/><circle cx="22" cy="102" r="4.500"/><path d="m25 105 4 4"/>
        <ellipse cx="17" cy="137" rx="11" ry="4"/><path d="M15 150v-22l2-3 2 3v22zM8 133v8M26 133v8"/></g>
        <path d="M5.500 167.500h6v6h-6zM14.500 167.500h6v6h-6zM22.500 167.500h6v6h-6zM5.500 175.500h17v14h-17z"/><path d="m10 179 7 4-7 4zM14 48h6l-3 3zM14 118h6l-3 3zM14 155h6l-3 3z" fill="#454a52" stroke="none"/>
      </svg>

      <form class="cmd">
        <div class="grip"><svg width="6" height="20" viewBox="0 0 6 20"><path d="M1 0v20M4 0v20" stroke="#a6a9af" stroke-width="2" stroke-dasharray="1 1"/></svg>
          <button type="button" aria-label="关闭"><svg class="i" viewBox="0 0 18 18"><path d="m5 5 8 8M13 5l-8 8" stroke="#dcdee1" stroke-width="2"/></svg></button>
          <button type="button" aria-label="自定义"><svg class="i" viewBox="0 0 18 18"><path d="m3 15 7-7" stroke="#c9ccd0" stroke-width="3"/><path d="M15 2q-3-1-5 1T9 8l3 2q3 0 4-2t1-4l-3 2-2-1z" fill="#c9ccd0"/></svg></button></div>
        <label class="line"><svg width="26" height="16" viewBox="0 0 26 16"><path d="M1.500 2.500h15v11h-15z" fill="#b4b4b6" stroke="#68686c"/><path d="M1 2h16v3H1z" fill="#5d5d61"/><path d="m4 7 3 2-3 2M8 11.500h4" fill="none" stroke="#55555a"/><path d="M19 6h7l-3.500 5z" fill="#4c4c50"/></svg>
          <input type="text" placeholder="键入命令" aria-label="命令"><svg width="8" height="8" viewBox="0 0 8 8"><path d="M0 6h8L4 2z" fill="#55555a"/></svg></label>
      </form>
    </div>
  </main>

  <footer>
    <div class="layouts"><button>布局1</button><button>布局2</button><button class="plus" aria-label="新建布局"><svg width="10" height="10" viewBox="0 0 10 10"><path d="M5 1v8M1 5h8" stroke="#b9bdc4" stroke-width="2"/></svg></button></div>
    <output>260396.952, 433052.531, 0.000</output>
    <button class="model">模型</button>
    <button aria-label="栅格"><svg class="i" viewBox="0 0 18 18"><path d="M5.500 1v16M12.500 1v16M1 4.500h16M1 9h16M1 13.500h16" stroke="#b9bec5"/></svg></button>
    <button class="act" aria-label="捕捉"><svg class="i" viewBox="0 0 18 18"><path d="M3 4h13M3 9h13M3 14h13" stroke="#fff" stroke-width="2" stroke-dasharray="2 3"/></svg></button><button class="arr" aria-label="捕捉设置"><svg><use href="#dn"/></svg></button>
    <button class="sep" aria-label="推断约束"><svg class="i" viewBox="0 0 18 18"><path d="M1 11h8v6H1z" fill="#e0e2e4"/><path d="M9.500 11V1.500h7v6h-7" fill="none" stroke="#b9bec5"/></svg></button>
    <button aria-label="动态输入"><svg class="i" viewBox="0 0 18 18"><path d="M4.500 2v7M1 5.500h7" stroke="#d8dadd"/><path d="M7 10h10v5H7z" fill="#d8dadd"/></svg></button>
    <button class="act" aria-label="正交"><svg class="i" viewBox="0 0 18 18"><path d="M2.500 1v15.500H17M2.500 9.500h6v7" fill="none" stroke="#e8eff8"/></svg></button>
    <button aria-label="极轴"><svg class="i" viewBox="0 0 18 18"><path d="M15 6a7 7 0 1 0 0 6M9 9.500h9M9 9l5-5M9 6v6" fill="none" stroke="#b9bec5"/></svg></button><button class="arr" aria-label="极轴设置"><svg><use href="#dn"/></svg></button>
    <button class="sep" aria-label="等轴测"><svg class="i" viewBox="0 0 18 18"><path d="m3 3 12 11" stroke="#c0525f" stroke-width="1.500"/><path d="M9.500 2v15" stroke="#4c9d62"/></svg></button><button class="arr" aria-label="等轴测设置"><svg><use href="#dn"/></svg></button>
    <button class="act" aria-label="对象捕捉追踪"><svg class="i" viewBox="0 0 18 18"><path d="M1 15.500h16M3 15 15 3" stroke="#dce9f8"/><path d="M8 8h3v3H8z" fill="#fff"/></svg></button>
    <button class="act" aria-label="对象捕捉"><svg class="i" viewBox="0 0 18 18"><path d="M3.500 4.500h12v12h-12z" fill="none" stroke="#dce9f8"/><circle cx="4" cy="4" r="2.500" fill="#5e8fc4" stroke="#dce9f8"/></svg></button><button class="arr" aria-label="捕捉模式"><svg><use href="#dn"/></svg></button>
    <button aria-label="线宽"><svg class="i" viewBox="0 0 18 18"><path d="M1 3h16M1 7h11" stroke="#d8dadd"/><path d="M1 11h16M1 15h14" stroke="#e4e6e8" stroke-width="2"/></svg></button>
    <button class="act" aria-label="透明度"><svg class="i" viewBox="0 0 18 18"><path d="M1 1h16v16H1z" fill="#fff"/><path d="M2 4h14M2 10h14M2 15h14" stroke="#5e8fc4" stroke-width="2" stroke-dasharray="2 3"/><path d="M4 7h12M4 13h12" stroke="#5e8fc4" stroke-width="2" stroke-dasharray="2 3"/></svg></button>
    <button aria-label="选择循环"><svg class="i" viewBox="0 0 18 18"><path d="M8 7h9v10H8z" fill="#7bd69b"/><path d="M1 3.500h10v3M4.500 1v9H7" fill="none" stroke="#aeb4bc"/></svg></button>
    <button aria-label="三维对象捕捉"><svg class="i" viewBox="0 0 18 18" fill="none"><path d="M4.500 9V4.500l3-3h9v9l-4 4H8M4.500 4.500h8v10M12.500 4.500l4-3" stroke="#b9bec5"/><path d="M1.500 11.500h5v5h-5z" stroke="#e98b4e"/></svg></button><button class="arr" aria-label="三维捕捉设置"><svg><use href="#dn"/></svg></button>
    <button class="sep" aria-label="动态 UCS"><svg class="i" viewBox="0 0 18 18"><path d="M4.500 3v12H17M2 5l2.500-3L7 5M14 12l3 3-3 2" fill="none" stroke="#d8dadd"/><path d="m8 11 3-5 2 5z" fill="#d8dadd"/></svg></button>
    <button aria-label="选择过滤"><svg class="i" viewBox="0 0 18 18"><path d="M2.500 4.500h10v11h-10zM4.500 2.500h11v11" fill="none" stroke="#b9bec5"/><path d="M1 3h3v3H1zM14 1h3v3h-3zM1 14h3v3H1zM12 14h3v3h-3z" fill="#62b1f2"/></svg></button><button class="arr" aria-label="过滤设置"><svg><use href="#dn"/></svg></button>
    <button class="act" aria-label="小控件"><svg class="i" viewBox="0 0 18 18" fill="none" stroke="#e8eff8"><circle cx="9" cy="9" r="5.500"/><path d="M9 9V1M9 9l-7 6M9 9l7 6M1 12v4h4M13 16h4v-4M7 3l2-2 2 2"/></svg></button><button class="arr" aria-label="小控件设置"><svg><use href="#dn"/></svg></button>
    <button class="act sep" aria-label="注释可见性"><svg class="i" viewBox="0 0 18 18"><path d="m8 1 3 9 4 6-6-3-8 4 4-7z" fill="#fff"/><circle cx="14" cy="4" r="2" fill="none" stroke="#fff"/></svg></button>
    <button aria-label="自动缩放"><svg class="i" viewBox="0 0 18 18"><path d="m8 1 3 9 4 6-6-3-8 4 4-7z" fill="#dcdee1"/><path d="m12 6 3-5v3h3" stroke="#d8dadd" fill="none"/></svg></button>
    <button aria-label="注释比例"><svg class="i" viewBox="0 0 18 18"><path d="m9 1 3 9 5 7-8-4-8 4 5-7z" fill="#dcdee1"/></svg></button>
    <button class="scale">1:1 / 100%<svg class="d"><use href="#dn"/></svg></button>
    <button class="sep" aria-label="切换工作空间"><svg class="i" viewBox="0 0 18 18" fill="none" stroke="#e4e6e8"><circle cx="9" cy="9" r="4.500" stroke-width="3"/><path d="M9 1v3M9 14v3M1 9h3M14 9h3M3 3l2 2M13 13l2 2M15 3l-2 2M5 13l-2 2" stroke-width="3"/></svg></button><button class="arr" aria-label="工作空间列表"><svg><use href="#dn"/></svg></button>
    <button aria-label="注释监视器"><svg class="i" viewBox="0 0 18 18"><path d="M9 2v14M2 9h14" stroke="#e4e6e8" stroke-width="2"/></svg></button>
    <button class="units sep"><svg class="i" viewBox="0 0 18 18"><path d="M5 1h9v16H5z" fill="#e0e2e4"/><path d="M5 4h4M5 7h3M5 10h4M5 13h3" stroke="#3b4453"/></svg>小数<svg class="d"><use href="#dn"/></svg></button>
    <button aria-label="快捷特性"><svg class="i" viewBox="0 0 18 18"><path d="M2.500 1.500h13v15h-13zM3 4.500h12M5 7.500h2M9 7.500h5M5 10.500h2M9 10.500h5M5 13.500h2M9 13.500h5" fill="none" stroke="#c5c9ce"/></svg></button>
    <button class="sep" aria-label="锁定用户界面"><svg class="i" viewBox="0 0 18 18"><path d="M8 13.500H1.500v-11h15V7M2 4h14" fill="none" stroke="#c5c9ce"/><path d="M8 11h7v6H8z" fill="#e4e6e8"/><path d="M13 11V9q2-3 4 0" fill="none" stroke="#e4e6e8"/></svg></button><button class="arr" aria-label="锁定设置"><svg><use href="#dn"/></svg></button>
    <button aria-label="隔离对象"><svg class="i" viewBox="0 0 18 18" fill="none" stroke="#b9bec5"><path d="M1.500 2.500h6v6h-6zM9 10l4 7H5z"/><circle cx="14" cy="8" r="3"/></svg></button>
    <button aria-label="图形性能"><svg class="i" viewBox="0 0 18 18"><circle cx="9" cy="9" r="7.500" fill="#747b86" stroke="#a6abb3"/><path d="m9 9 5 5" stroke="#dcdee1" stroke-width="2"/></svg></button>
    <button class="act sep" aria-label="全屏显示"><svg class="i" viewBox="0 0 18 18"><path d="M5 0v7M1 3h8M12 8l5-5M3 14h10" stroke="#fff" stroke-width="2"/></svg></button>
  </footer>
</div>
</body>
</html>
```
FILE: styles.css
```css
* { box-sizing: border-box; }
body {
  margin: 0;
  height: 100vh;
  padding: 0 1px 2px 0;
  background: #fff;
  font: 12px/16px "Noto Sans", "Noto Sans CJK SC", sans-serif;
  color: #dfe2e6;
}
button {
  border: 0;
  padding: 0;
  margin: 0;
  background: none;
  color: inherit;
  font: inherit;
  display: flex;
  align-items: center;
  justify-content: center;
  white-space: nowrap;
}
h1, h2, ul { margin: 0; padding: 0; font: inherit; list-style: none; }
svg { flex: none; }
.sprite { position: absolute; width: 0; height: 0; }
.i { width: 18px; height: 18px; }
.b { width: 34px; height: 34px; }
.d, .arr svg { width: 8px; height: 8px; }

.frame {
  height: 100%;
  display: flex;
  flex-direction: column;
  border: 3px solid #000;
  border-radius: 140px;
  overflow: hidden;
  background: #3b4453;
}

/* title bar */
.title {
  display: flex;
  align-items: center;
  height: 22px;
  flex: none;
  background: #485063;
}
.quick { display: flex; align-items: center; padding-left: 69px; width: 368px; flex: none; }
.quick button { width: 24px; }
.quick .arr { width: 12px; }
.title h1 { display: flex; gap: 10px; flex: 1; color: #9198a5; white-space: nowrap; }
.app { font-size: 13px; }
.info { display: flex; align-items: center; padding-right: 134px; }
.play { width: 8px; height: 8px; margin-right: 5px; }
.info input {
  width: 181px;
  height: 20px;
  padding: 0 2px;
  background: #434b5d;
  border: 1px solid #30384a;
  font: italic 11px "Noto Sans", "Noto Sans CJK SC", sans-serif;
  color: #dfe2e6;
}
.info input::placeholder { color: #bcc1ca; }
.info button { width: 24px; }
.info .arr { width: 10px; }
.info .far { margin: 0 4px 0 59px; }
.info .login { width: auto; gap: 4px; }
.info .help {
  width: 16px;
  height: 16px;
  margin: 0 6px 0 18px;
  border-radius: 50%;
  background: #f2f4f7;
  color: #2b5fc0;
  font-weight: bold;
}

/* menu bar and ribbon tabs */
.menu {
  display: flex;
  gap: 23px;
  height: 23px;
  flex: none;
  padding: 3px 0 0 52px;
  background: #4a5164;
  border-bottom: 2px solid #3d4656;
  color: #a6acb7;
}
.tabs {
  display: flex;
  height: 19px;
  flex: none;
  background: #222933;
  color: #aab0b9;
}
.tabs button { padding: 0 10px; }
.tabs .on { background: #3b4453; color: #dfe2e6; }
.tabs .mini { gap: 4px; padding-left: 20px; }

/* ribbon */
.ribbon { display: flex; flex: none; height: 99px; background: #222933; }
.g {
  display: flex;
  flex-direction: column;
  flex: none;
  background: #3b4453;
  border-right: 1px solid #2a323f;
}
.g h2 {
  position: relative;
  display: flex;
  align-items: center;
  justify-content: center;
  gap: 6px;
  height: 18px;
}
.launch { position: absolute; right: 4px; width: 8px; height: 8px; }
.body { display: flex; flex: 1; padding: 4px 0 0 4px; }
.big {
  flex-direction: column;
  justify-content: flex-start;
  width: 42px;
  line-height: 16px;
}
.big .b { margin-bottom: 5px; }
.col { display: grid; grid-template-rows: repeat(3, 24px); row-gap: 1px; align-content: start; }
.s { justify-content: flex-start; gap: 5px; }
.s .d { margin-left: 5px; }
.draw { width: 212px; }
.draw .body { padding-left: 1px; }
.draw .big { width: 41px; }
.gap { margin-left: 6px; }
.draw .s { gap: 0; }
.modify { width: 229px; }
.c60 { width: 60px; }
.c75 { width: 75px; }
.anno { width: 157px; }
.anno .s { gap: 4px; }
.layer { width: 252px; }
.layer .big, .props .big { width: 34px; }
.stackcol { display: flex; flex-direction: column; gap: 4px; margin-left: 5px; padding-top: 1px; }
.combo {
  display: flex;
  align-items: center;
  width: 180px;
  height: 21px;
  padding: 0 1px 0 8px;
  background: #4d586c;
  border: 1px solid #2f3846;
}
.combo select {
  appearance: none;
  flex: 1;
  min-width: 0;
  padding: 0;
  border: 0;
  background: none;
  color: #e3e6ea;
  font: inherit;
}
.sw { width: 16px; height: 16px; margin: 0 9px 0 3px; background: #fff; border: 1px solid #222; }
.rule { width: 64px; height: 1px; margin-right: 2px; background: #c5cad1; }
.ln { padding-left: 3px; }
.lay { width: 207px; padding-left: 0; gap: 1px; }
.lay .sw { margin: 0 4px 0 2px; }
.irow { display: flex; gap: 6px; height: 21px; }
.irow .tx { gap: 5px; }
.block { width: 135px; }
.block .big { width: 40px; }
.block .s { gap: 4px; }
.props { width: 246px; }
.ic { margin-left: 4px; }
.props .ic { align-items: center; margin-left: 4px; }
.props .stackcol { margin-left: 2px; }
.group { width: 68px; }
.group .body { padding-left: 3px; }
.group .big { width: 34px; }
.group .ic { margin-left: 5px; }
.hot { width: 24px; margin-left: -3px; justify-content: center; background: #3f5f80; border: 1px solid #5ea5dc; }
.util { width: 76px; }
.util .col { margin-left: 3px; }
.clip { width: 77px; }
.clip .col { margin-left: 5px; }
.view { width: 61px; }
.view .body { padding-left: 9px; }
.view h2 { padding-right: 14px; }

/* main area */
main {
  display: flex;
  flex: 1;
  min-height: 0;
  border-top: 1px solid #242c38;
}
aside {
  display: flex;
  flex-direction: column;
  width: 131px;
  margin: 4px 3px 7px 0;
  flex: none;
  background: #efefef;
  color: #2c2c2c;
  font-size: 10px;
}
aside h2 {
  display: flex;
  align-items: center;
  gap: 4px;
  height: 24px;
  padding-left: 5px;
  background: #2d3340;
  color: #c9cdd3;
  font-size: 12px;
}
aside li button { position: relative; height: 21px; padding-left: 26px; }
aside > ul > li > button::before {
  content: "";
  position: absolute;
  left: 11px;
  border: 3px solid transparent;
  border-left: 4px solid #1414e6;
  border-right: 0;
}
aside > ul > .open > button::before {
  left: 10px;
  border: 3px solid transparent;
  border-top: 4px solid #1414e6;
  border-bottom: 0;
}
aside li ul { background: #d6d6d6; border-top: 2px solid #adadad; margin-right: 2px; }
aside li li:first-child button { height: 19px; }

.canvas { position: relative; flex: 1; margin-top: 2px; overflow: hidden; background: #212830; }
.plan { display: block; width: 100%; height: 100%; }
.note { font: bold 8px "Noto Sans", "Noto Sans CJK SC", sans-serif; fill: #eceded; }
.vp { position: absolute; left: 2px; top: 5px; color: #c3c6ca; }
.cube { position: absolute; right: 13px; top: 6px; width: 118px; height: 170px; }
.cube text { text-anchor: middle; font-family: "Noto Sans CJK SC", sans-serif; }
.cube .sans { font-family: "Liberation Sans", sans-serif; }
.nav { position: absolute; right: 1px; top: 193px; width: 34px; height: 208px; }
.cmd {
  position: absolute;
  bottom: 0;
  left: 0;
  right: 0;
  display: flex;
  width: 489px;
  height: 26px;
  margin: 0 auto;
}
.grip {
  display: flex;
  align-items: center;
  gap: 3px;
  width: 55px;
  padding-left: 2px;
  background: rgba(43, 49, 62, .85);
}
.line {
  display: flex;
  align-items: center;
  flex: 1;
  gap: 8px;
  padding: 0 5px 0 3px;
  background: rgba(216, 216, 216, .85);
}
.line input {
  flex: 1;
  min-width: 0;
  border: 0;
  padding: 0;
  background: none;
  font: italic 12px "Noto Sans", "Noto Sans CJK SC", sans-serif;
}
.line input::placeholder { color: #68686c; }

/* status bar */
footer { display: flex; flex: none; height: 27px; padding-top: 2px; background: #222933; border-top: 1px solid #343d4b; }
footer > button { flex: none; width: 24px; background: #3b4453; border-right: 1px solid #303947; }
footer > .arr { width: 16px; }
footer > .act { background: #5e8fc4; }
footer > .sep { margin-left: 2px; }
footer > .model { width: 28px; margin: 0 1px 0 4px; }
footer > .scale { width: 76px; gap: 4px; }
footer > .units { width: 98px; gap: 6px; }
.units .d { margin-left: 24px; }
output { flex: none; width: 180px; display: flex; align-items: center; justify-content: center; padding-left: 8px; background: #3b4453; font-size: 11px; }
.layouts { display: flex; width: 314px; flex: none; padding: 0 0 8px 61px; color: #a2a8b2; }
.layouts button { padding: 0 10px; background: #2c3440; border-radius: 0 0 10px 10px; margin-right: 2px; }
```
